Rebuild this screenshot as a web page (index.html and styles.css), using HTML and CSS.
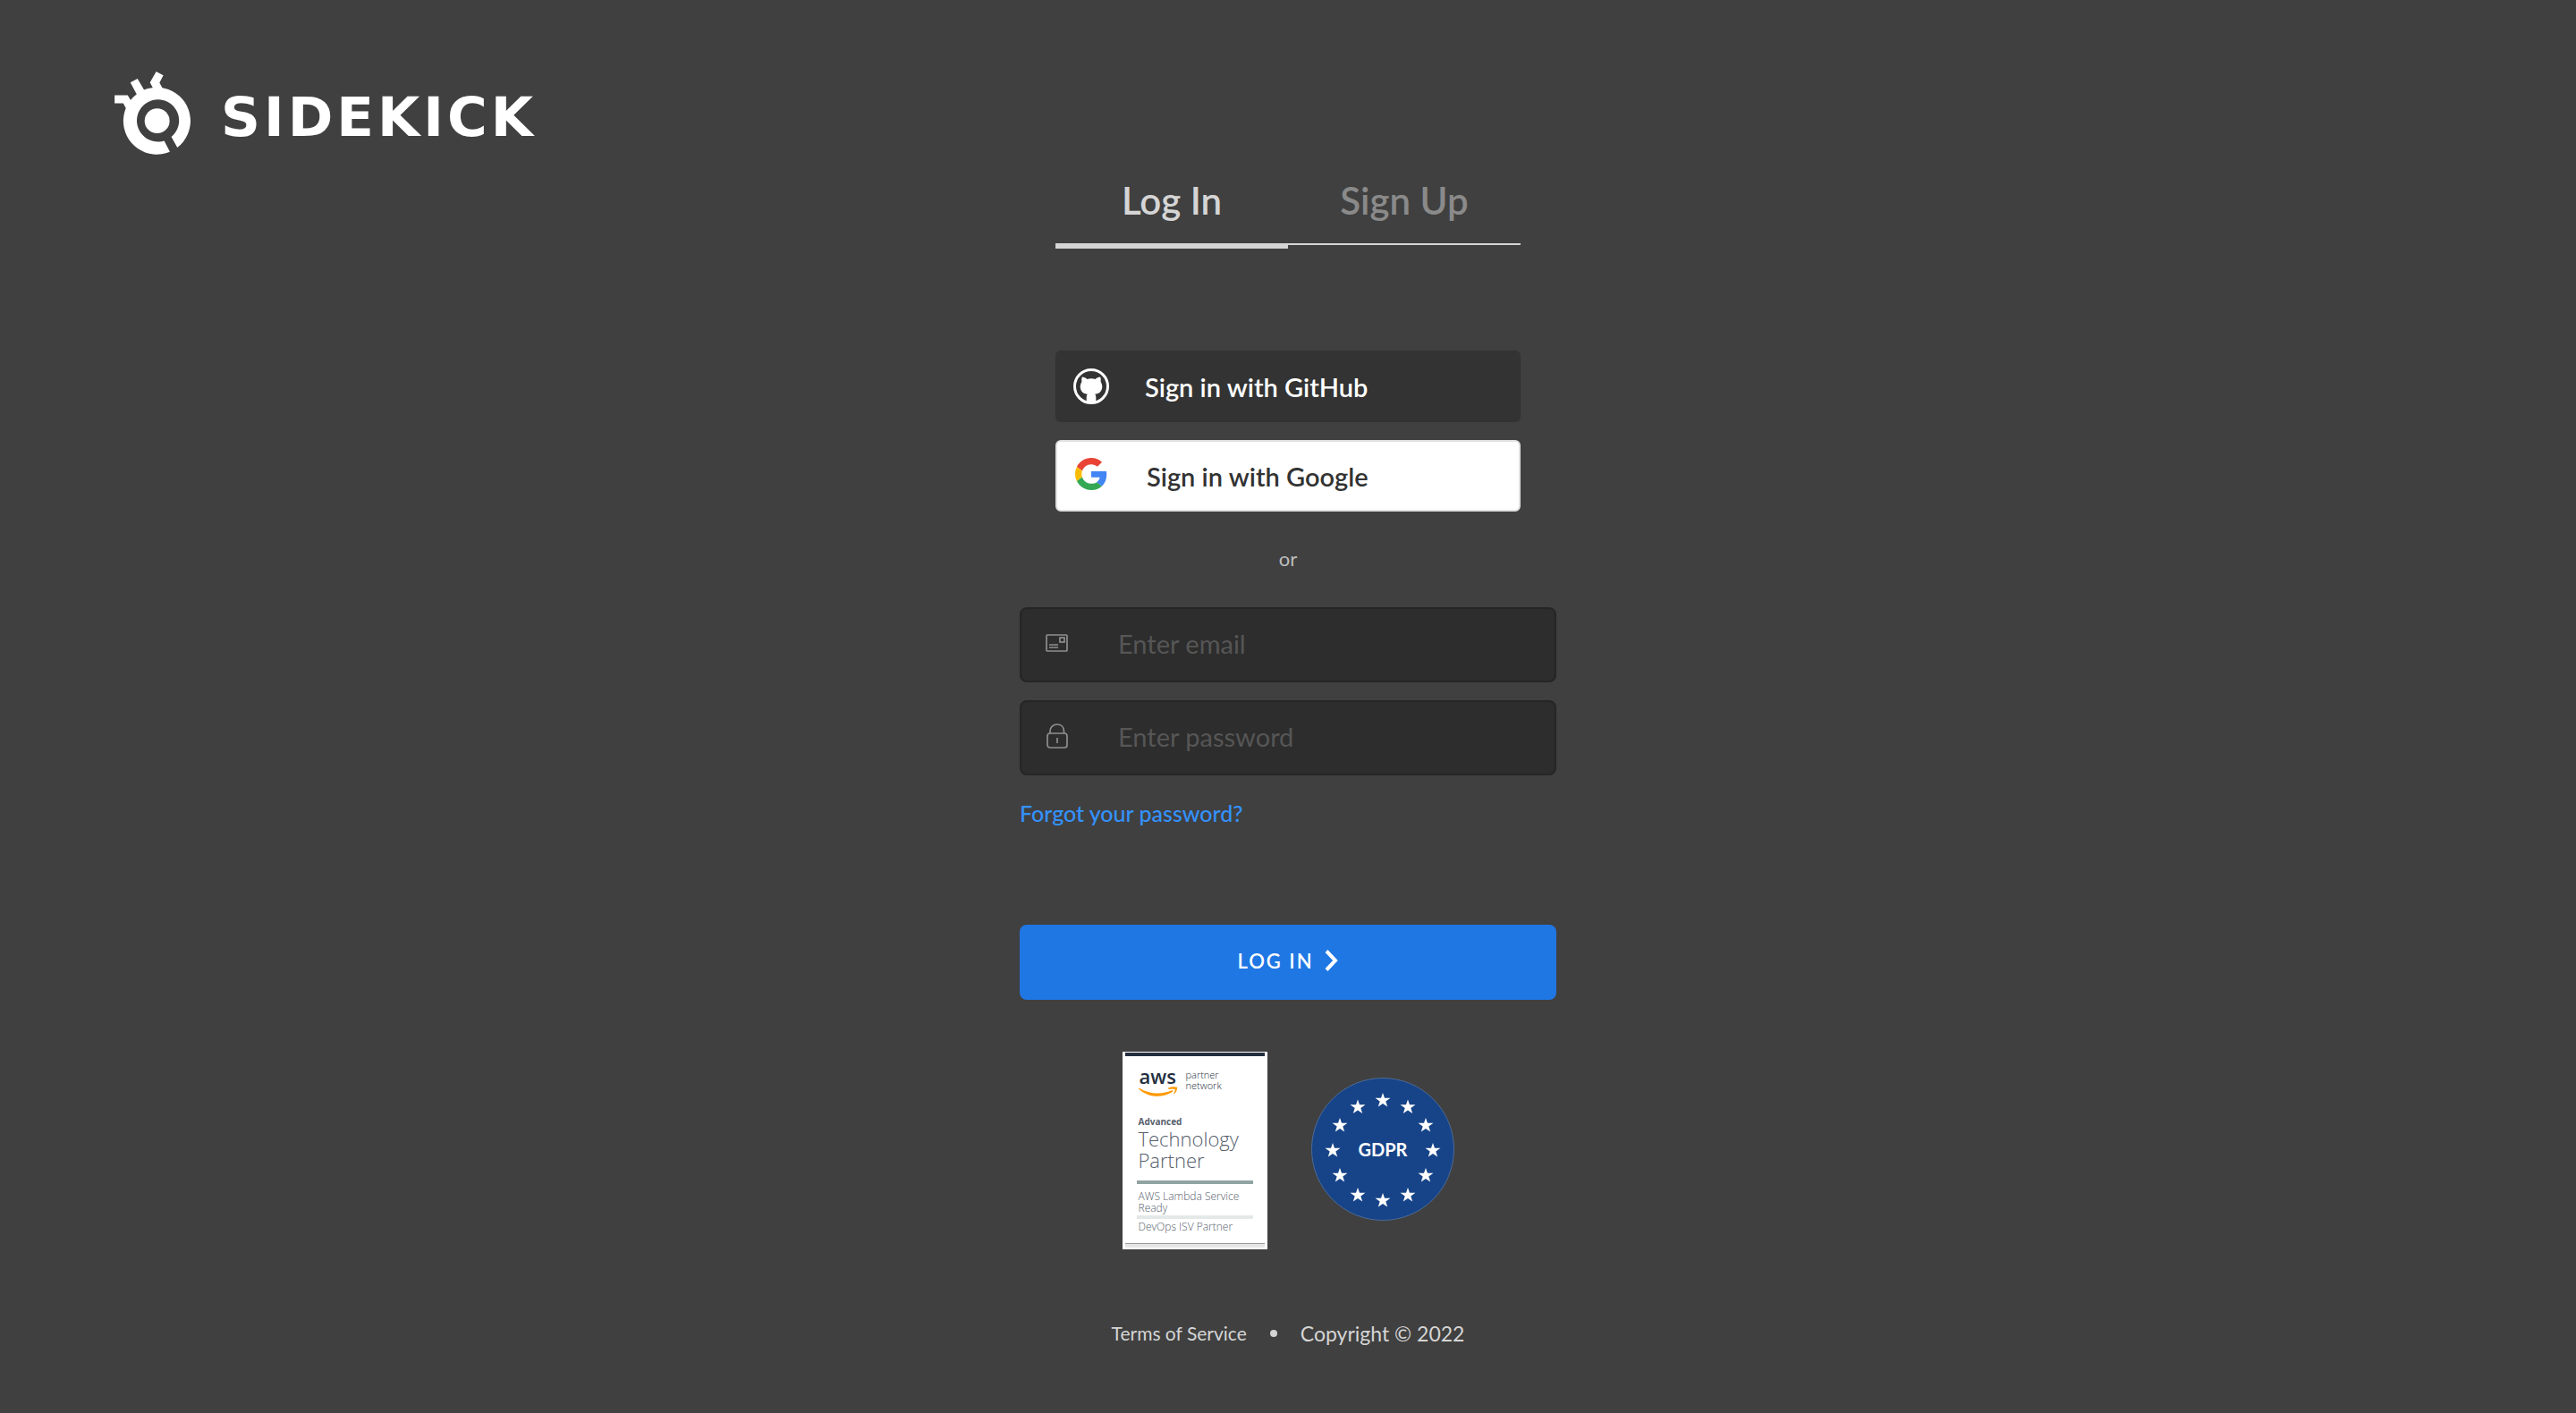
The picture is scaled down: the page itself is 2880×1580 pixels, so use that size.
FILE: index.html
```html
<!DOCTYPE html>
<html lang="en">
<head>
<meta charset="utf-8">
<meta name="viewport" content="width=device-width, initial-scale=1">
<title>Sidekick – Log In</title>
<link rel="stylesheet" href="styles.css">
</head>
<body>
<header class="site-header">
  <a class="brand" href="#">
    <svg class="brand-mark" viewBox="54 30 258 280" fill="#fff" aria-hidden="true">
      <path d="M240 300.500A113 113 0 1 1 265 286L245 250A71 71 0 1 0 221 263Z"/>
      <circle cx="197" cy="196" r="42"/>
      <path d="M54 110H98L108 126 120 142 94 157 83 137H54Z"/>
      <path d="M107 67 131 54 154 93 158 110 138 116 128 106Z"/>
      <path d="M194 30 218 43 205 68 215 86 216 100H188L183 86 173 67Z"/>
    </svg>
    <span class="brand-name">SIDEKICK</span>
  </a>
</header>

<main class="auth">
  <div class="tabs" role="tablist">
    <button class="tab tab-active" type="button" role="tab" aria-selected="true">Log In</button>
    <button class="tab" type="button" role="tab" aria-selected="false">Sign Up</button>
  </div>

  <div class="providers">
    <button class="provider provider-github" type="button">
      <svg class="provider-icon" viewBox="0 0 40 40" aria-hidden="true">
        <circle cx="20" cy="20" r="18.500" fill="none" stroke="#fff" stroke-width="3"/>
        <path fill="#fff" d="M9.800 9.600C12 9.600 14 10.800 15.400 11.900Q20 10.800 24.600 11.900C26 10.800 28 9.600 30.200 9.600Q31.200 12.300 30.600 15Q32.300 17.200 32.300 20C32.300 26 28.500 28.300 24.200 28.800Q25.300 30 25.300 32V38H14.700V32Q14.700 30 15.800 28.800C11.500 28.300 7.700 26 7.700 20Q7.700 17.200 9.400 15Q8.800 12.300 9.800 9.600Z"/>
      </svg>
      <span>Sign in with GitHub</span>
    </button>
    <button class="provider provider-google" type="button">
      <svg class="provider-icon provider-icon-google" viewBox="0 0 48 48" aria-hidden="true">
        <path fill="#ea4335" d="M24 9.500c3.540 0 6.710 1.220 9.210 3.600l6.850-6.850C35.900 2.380 30.470 0 24 0 14.620 0 6.510 5.380 2.560 13.220l7.980 6.190C12.430 13.720 17.740 9.500 24 9.500z"/>
        <path fill="#4285f4" d="M46.980 24.550c0-1.570-.15-3.090-.38-4.550H24v9.020h12.940c-.58 2.960-2.260 5.480-4.780 7.180l7.730 6c4.510-4.180 7.090-10.360 7.090-17.650z"/>
        <path fill="#fbbc05" d="M10.530 28.590c-.48-1.450-.76-2.990-.76-4.590s.27-3.140.76-4.590l-7.980-6.190C.92 16.460 0 20.120 0 24c0 3.880.92 7.540 2.560 10.780l7.970-6.190z"/>
        <path fill="#34a853" d="M24 48c6.480 0 11.930-2.130 15.890-5.810l-7.730-6c-2.150 1.450-4.920 2.300-8.160 2.300-6.260 0-11.570-4.220-13.470-9.910l-7.980 6.190C6.510 42.620 14.620 48 24 48z"/>
      </svg>
      <span>Sign in with Google</span>
    </button>
  </div>

  <p class="divider">or</p>

  <form class="login-form">
    <label class="field">
      <svg class="field-icon" viewBox="0 0 26 28" fill="none" stroke="#8e8e8e" stroke-width="1.700" aria-hidden="true">
        <rect x="1" y="5" width="23" height="18" rx="1"/>
        <rect x="16" y="8" width="5" height="5"/>
        <path d="M4 16H14M4 19H14"/>
      </svg>
      <input class="field-input" type="email" placeholder="Enter email" aria-label="Email">
    </label>
    <label class="field">
      <svg class="field-icon" viewBox="0 0 26 28" fill="none" stroke="#8e8e8e" stroke-width="1.700" aria-hidden="true">
        <rect x="2" y="11" width="22" height="16" rx="3"/>
        <path d="M5 11V8.500C5 4 8.500 1 13 1S20.500 4 20.500 8.500V11M13 16V22"/>
      </svg>
      <input class="field-input" type="password" placeholder="Enter password" aria-label="Password">
    </label>
    <a class="forgot" href="#">Forgot your password?</a>
    <button class="submit" type="submit">
      <span>LOG IN</span>
      <svg class="submit-icon" viewBox="0 0 16 24" fill="none" stroke="#fff" stroke-width="4" aria-hidden="true"><path d="M2 1.500 12 12 2 22.500"/></svg>
    </button>
  </form>

  <div class="badges">
    <section class="aws" aria-label="AWS partner">
      <div class="aws-head">
        <div class="aws-logo">
          <span class="aws-word">aws</span>
          <svg class="aws-smile" viewBox="0 0 44 12" aria-hidden="true"><path fill="#f90" d="M.5 1.500C12 9 27 9 37.500 4L38.500 5.500C27 13 11 13 0 2.500ZM33 1.500C37 0 41 0 43 .8C43.500 3 42 6.500 39.500 8.500L39 8C40 6 41 4 40.500 3C39 2.500 36 2.700 33.500 3Z"/></svg>
        </div>
        <div class="aws-network">partner<br>network</div>
      </div>
      <div class="aws-level">Advanced</div>
      <div class="aws-title">Technology<br>Partner</div>
      <div class="aws-item aws-item-main">AWS Lambda Service<br>Ready</div>
      <div class="aws-item">DevOps ISV Partner</div>
    </section>
    <svg class="gdpr" viewBox="0 0 160 160" role="img" aria-label="GDPR">
      <defs><path id="star" fill="#fff" d="M0-8.500 2-2.700H8.500L3.300 1 5.200 7 0 3.400-5.200 7-3.300 1-8.500-2.700H-2Z"/></defs>
      <circle cx="80" cy="80" r="79.500" fill="#174488" stroke="#4d6a94"/>
      <use href="#star" x="80" y="25.500"/><use href="#star" x="108" y="33"/>
      <use href="#star" x="128" y="53.500"/><use href="#star" x="136" y="81.500"/>
      <use href="#star" x="128" y="109.500"/><use href="#star" x="108" y="131.500"/>
      <use href="#star" x="80" y="137.500"/><use href="#star" x="52" y="131.500"/>
      <use href="#star" x="32" y="109.500"/><use href="#star" x="24" y="81.500"/>
      <use href="#star" x="32" y="53.500"/><use href="#star" x="52" y="33"/>
      <text class="gdpr-text" x="80" y="88" text-anchor="middle">GDPR</text>
    </svg>
  </div>
</main>

<footer class="site-footer">
  <a class="terms" href="#">Terms of Service</a>
  <span class="dot"></span>
  <span>Copyright © 2022</span>
</footer>
</body>
</html>
```
FILE: styles.css
```css
* {
  box-sizing: border-box;
}

body {
  margin: 0;
  min-height: 100vh;
  background: #404040;
  color: #d5d5d5;
  font-family: Lato, "Open Sans", sans-serif;
}

button,
input {
  font: inherit;
}

button {
  border: 0;
  cursor: pointer;
}

a {
  color: inherit;
  text-decoration: none;
}

.site-header {
  padding: 80px 128px 0;
}

.brand {
  display: inline-flex;
  align-items: flex-end;
  gap: 33px;
  vertical-align: top;
  color: #fff;
}

.brand-mark {
  width: 86px;
  height: 93px;
}

.brand-name {
  font: bold 61px/84px "DejaVu Sans", sans-serif;
  letter-spacing: 4px;
}

.auth {
  display: flex;
  flex-direction: column;
  align-items: center;
  padding-top: 27px;
}

.tabs {
  display: grid;
  grid-template-columns: 1fr 1fr;
  align-items: start;
  width: 100%;
  max-width: 520px;
}

.tab {
  padding: 0 0 24px;
  border-bottom: 2px solid #d5d5d5;
  background: none;
  color: #8a8a8a;
  font-size: 42px;
  font-weight: 600;
  line-height: 48px;
}

.tab-active {
  border-bottom-width: 6px;
  color: #d5d5d5;
}

.providers {
  display: grid;
  gap: 20px;
  width: 100%;
  max-width: 520px;
  margin-top: 114px;
}

.provider {
  display: flex;
  align-items: center;
  gap: 40px;
  height: 80px;
  padding: 0 20px;
  border-radius: 6px;
  font-size: 29px;
  font-weight: 600;
}

.provider-github {
  background: #333;
  color: #fff;
}

.provider-google {
  border: 2px solid #e0e0e0;
  background: #fff;
  color: #333;
}

.provider-icon {
  flex: none;
  width: 40px;
  height: 40px;
}

.provider-icon-google {
  padding: 0 4px 4px 0;
}

.divider {
  margin: 39px 0 40px;
  color: #bdbdbd;
  font-size: 22px;
  line-height: 28px;
}

.login-form {
  display: flex;
  flex-direction: column;
  gap: 20px;
  width: 100%;
  max-width: 600px;
}

.field {
  display: flex;
  align-items: center;
  gap: 55px;
  height: 84px;
  padding: 0 27px 4px;
  border: 2px solid #252525;
  border-radius: 8px;
  background: #2d2d2d;
}

.field-icon {
  flex: none;
  width: 26px;
  height: 28px;
}

.field-input {
  flex: 1;
  min-width: 0;
  padding: 0;
  border: 0;
  outline: 0;
  background: none;
  color: #d5d5d5;
  font-size: 29px;
}

.field-input::placeholder {
  color: #565656;
}

.forgot {
  align-self: flex-start;
  margin-top: 6px;
  color: #3492ff;
  font-size: 25px;
  font-weight: 500;
  line-height: 32px;
}

.submit {
  display: flex;
  align-items: center;
  justify-content: center;
  gap: 12px;
  height: 84px;
  margin-top: 89px;
  padding: 0 0 4px;
  border-radius: 8px;
  background: #1f77e4;
  color: #fff;
  font-size: 22px;
  font-weight: 600;
  letter-spacing: 2px;
}

.submit-icon {
  width: 16px;
  height: 24px;
}

.badges {
  display: flex;
  align-items: flex-start;
  gap: 49px;
  margin-top: 58px;
}

.aws {
  display: flex;
  flex-direction: column;
  width: 162px;
  height: 221px;
  padding: 1px 3px 2px;
  background: #fff;
  color: #56606b;
  font-family: "Open Sans", "Noto Sans", sans-serif;
  font-weight: 300;
}

.aws::before {
  height: 4px;
  background: #232f3e;
  content: "";
}

.aws::after {
  height: 4px;
  margin-top: auto;
  border-top: 1px solid #999;
  background: #e6e6e6;
  content: "";
}

.aws-head {
  display: flex;
  gap: 9px;
  padding: 12px 0 0 15px;
}

.aws-logo {
  display: flex;
  flex-direction: column;
  gap: 2px;
}

.aws-word {
  padding-left: 1px;
  color: #232f3e;
  font-size: 22px;
  font-weight: 600;
  line-height: 20px;
}

.aws-smile {
  width: 44px;
  height: 12px;
}

.aws-network {
  padding-top: 3px;
  color: #232f3e;
  font-size: 11px;
  line-height: 12px;
}

.aws-level {
  margin: 21px 15px 1px;
  font-size: 10px;
  font-weight: 700;
  line-height: 12px;
}

.aws-title {
  margin: 0 13px;
  padding: 0 2px 11px;
  border-bottom: 4px solid #90a4a2;
  font-size: 22px;
  line-height: 24px;
}

.aws-item {
  margin: 0 13px;
  padding: 2px 2px 0;
  font-size: 12px;
  line-height: 13px;
  white-space: nowrap;
}

.aws-item-main {
  padding: 7px 2px 2px;
  border-bottom: 4px solid #e4e9e8;
}

.gdpr {
  width: 160px;
  height: 160px;
  margin-top: 29px;
}

.gdpr-text {
  fill: #fff;
  font-size: 20px;
  font-weight: 700;
}

.site-footer {
  display: flex;
  align-items: center;
  justify-content: center;
  gap: 26px;
  margin-top: 80px;
  font-size: 23px;
  line-height: 28px;
}

.terms {
  font-size: 21px;
}

.dot {
  width: 8px;
  height: 8px;
  border-radius: 50%;
  background: #d5d5d5;
}
```
